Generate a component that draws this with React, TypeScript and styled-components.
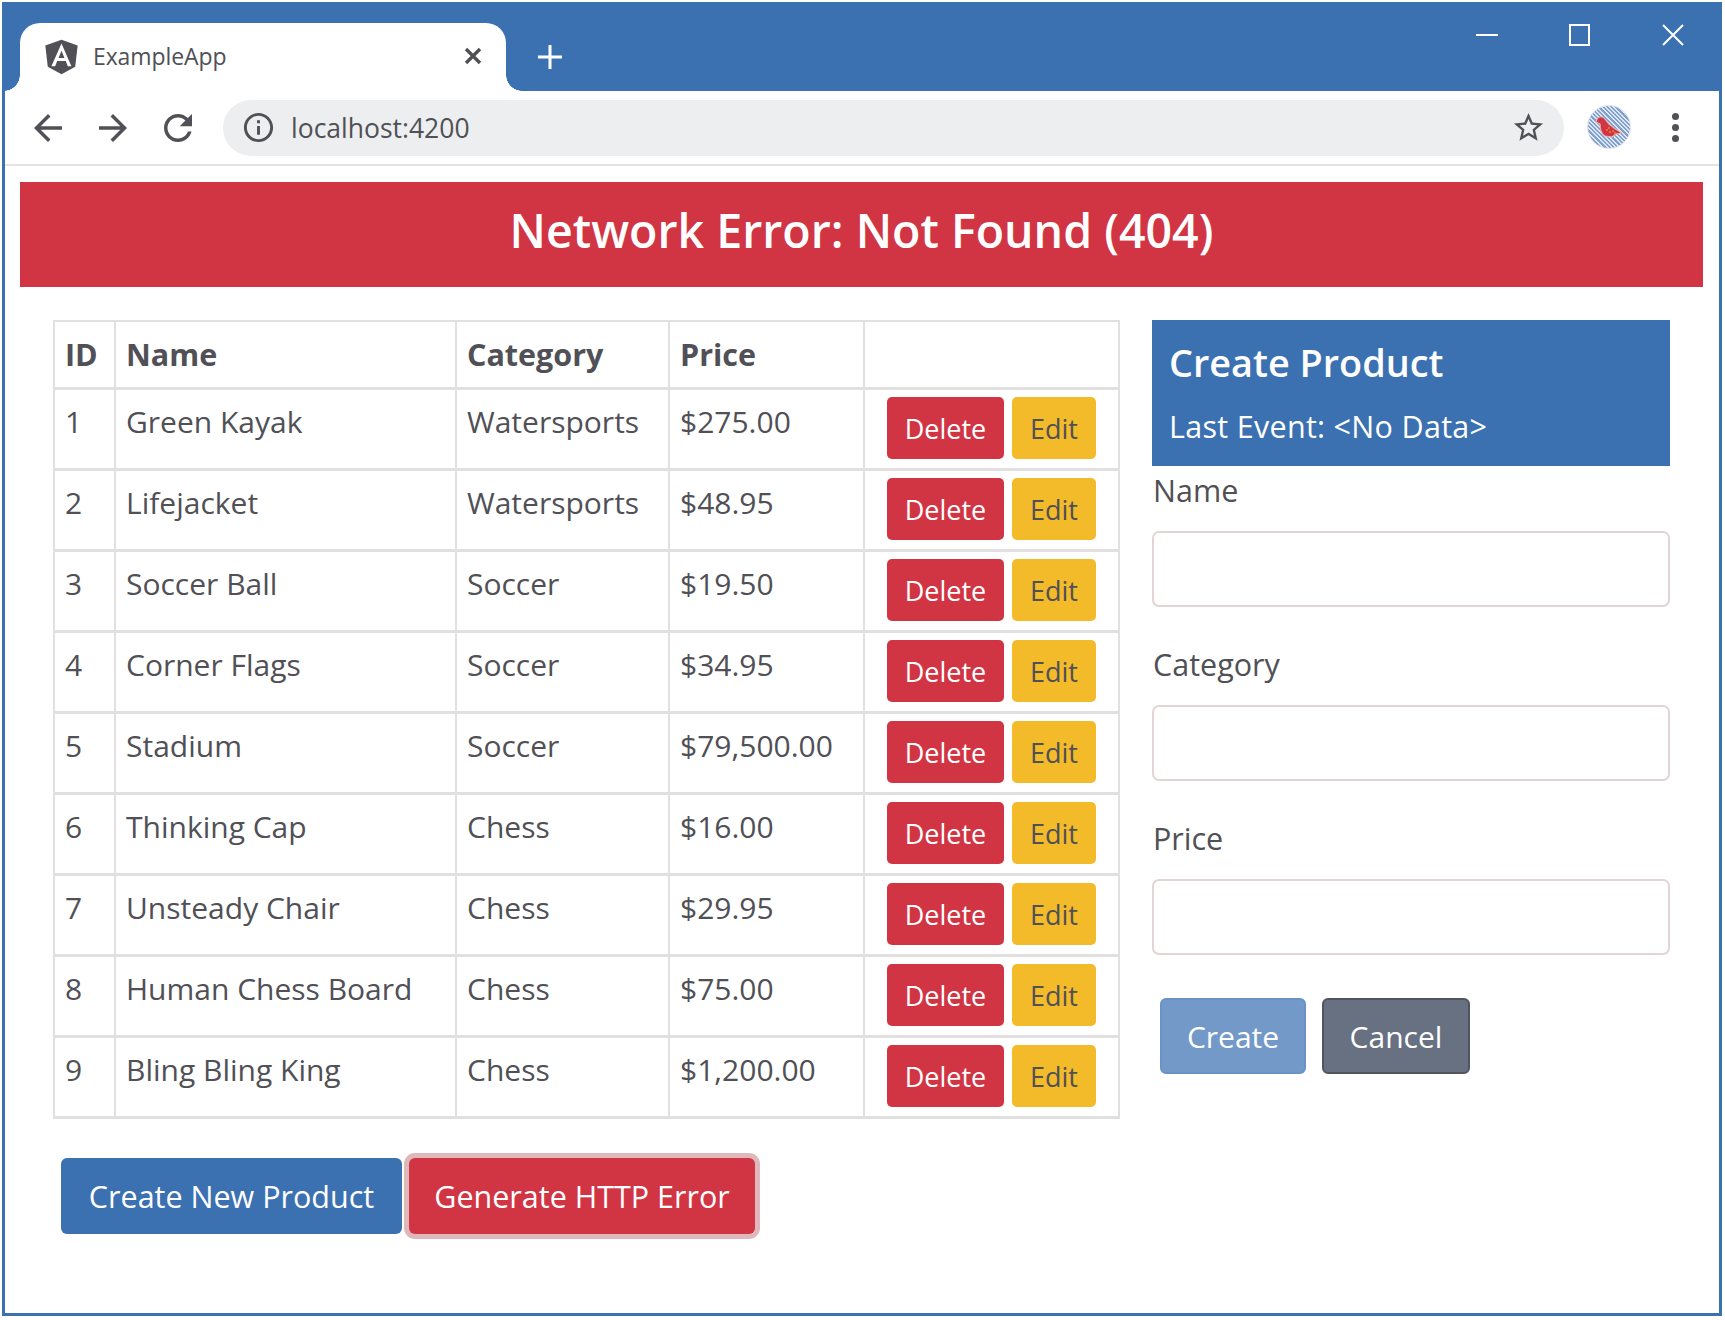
import React from "react";
import styled, { createGlobalStyle } from "styled-components";

const blue = "#3b71b1";
const red = "#d13544";
const ink = "#505056";

const GlobalStyle = createGlobalStyle`
  html, body {
    margin: 0;
    padding: 0;
    background: #ffffff;
  }
  * {
    box-sizing: border-box;
  }
`;

const products = [
  { id: 1, name: "Green Kayak", category: "Watersports", price: "$275.00" },
  { id: 2, name: "Lifejacket", category: "Watersports", price: "$48.95" },
  { id: 3, name: "Soccer Ball", category: "Soccer", price: "$19.50" },
  { id: 4, name: "Corner Flags", category: "Soccer", price: "$34.95" },
  { id: 5, name: "Stadium", category: "Soccer", price: "$79,500.00" },
  { id: 6, name: "Thinking Cap", category: "Chess", price: "$16.00" },
  { id: 7, name: "Unsteady Chair", category: "Chess", price: "$29.95" },
  { id: 8, name: "Human Chess Board", category: "Chess", price: "$75.00" },
  { id: 9, name: "Bling Bling King", category: "Chess", price: "$1,200.00" },
];

const fields = ["Name", "Category", "Price"];

const App = () => {
  return (
    <>
      <GlobalStyle />
      <Frame>
        <TitleBar>
          <Tab>
            <svg width="33" height="38" viewBox="30 28 190 204">
              <path
                fill={ink}
                d="M125 30L31.9 63.2l14.2 123.1L125 230l78.9-43.7 14.2-123.1z"
              />
              <path
                fill="#fff"
                d="M125 52.1L66.8 182.6h21.7l11.7-29.2h49.4l11.7 29.2H182L125 52.1zm17 83.3h-34l17-40.9 17 40.9z"
              />
            </svg>
            <TabTitle>ExampleApp</TabTitle>
            <TabClose width="20" height="20" viewBox="0 0 20 20">
              <path d="M3 3l14 14M17 3L3 17" stroke={ink} strokeWidth="3.4" />
            </TabClose>
          </Tab>
          <NewTab width="26" height="26" viewBox="0 0 26 26">
            <path d="M13 1v24M1 13h24" stroke="#fff" strokeWidth="3" />
          </NewTab>
          <WindowControls>
            <WindowButton>
              <svg width="24" height="24" viewBox="0 0 24 24">
                <path d="M1 12h22" stroke="#fff" strokeWidth="2" />
              </svg>
            </WindowButton>
            <WindowButton>
              <svg width="24" height="24" viewBox="0 0 24 24">
                <rect x="2" y="2" width="19" height="20" fill="none" stroke="#fff" strokeWidth="2" />
              </svg>
            </WindowButton>
            <WindowButton>
              <svg width="24" height="24" viewBox="0 0 24 24">
                <path d="M2 2l20 20M22 2L2 22" stroke="#fff" strokeWidth="2" />
              </svg>
            </WindowButton>
          </WindowControls>
        </TitleBar>

        <Toolbar>
          <NavIcon viewBox="0 0 24 24">
            <path d="M20 11H7.83l5.59-5.59L12 4l-8 8 8 8 1.41-1.41L7.83 13H20v-2z" />
          </NavIcon>
          <NavIcon viewBox="0 0 24 24">
            <path d="M12 4l-1.41 1.41L16.17 11H4v2h12.17l-5.58 5.59L12 20l8-8z" />
          </NavIcon>
          <NavIcon viewBox="0 0 24 24">
            <path d="M17.65 6.35C16.2 4.9 14.21 4 12 4c-4.42 0-7.99 3.58-7.99 8s3.57 8 7.99 8c3.73 0 6.84-2.55 7.73-6h-2.08c-.82 2.33-3.04 4-5.65 4-3.31 0-6-2.69-6-6s2.69-6 6-6c1.66 0 3.14.69 4.22 1.78L13 11h7V4l-2.35 2.35z" />
          </NavIcon>
          <AddressBar>
            <AddressIcon viewBox="0 0 24 24">
              <path d="M11 7h2v2h-2zm0 4h2v6h-2zm1-9C6.48 2 2 6.48 2 12s4.48 10 10 10 10-4.48 10-10S17.52 2 12 2zm0 18c-4.41 0-8-3.59-8-8s3.59-8 8-8 8 3.59 8 8-3.59 8-8 8z" />
            </AddressIcon>
            <Url>localhost:4200</Url>
            <AddressIcon viewBox="0 0 24 24">
              <path d="M22 9.24l-7.19-.62L12 2 9.19 8.63 2 9.24l5.46 4.73L5.82 21 12 17.27 18.18 21l-1.63-7.03L22 9.24zM12 15.4l-3.76 2.27 1-4.28-3.32-2.88 4.38-.38L12 6.1l1.71 4.04 4.38.38-3.32 2.88 1 4.28L12 15.4z" />
            </AddressIcon>
          </AddressBar>
          <Avatar>
            <svg width="30" height="24" viewBox="0 0 30 24">
              <path
                fill={red}
                stroke="#e2b6b8"
                strokeWidth="1.2"
                d="M3 4C5 1 9 1 11 4l4 5 5 4 8 5-6 1-4 3-7-1C7 19 6 14 6 9L2 7z"
              />
              <g fill="#f3bb2a">
                <circle cx="13" cy="15" r="0.8" />
                <circle cx="16" cy="17" r="0.8" />
                <circle cx="19" cy="16" r="0.8" />
                <circle cx="15" cy="13" r="0.8" />
                <circle cx="21" cy="18" r="0.8" />
              </g>
            </svg>
          </Avatar>
          <Kebab>
            <Dot />
            <Dot />
            <Dot />
          </Kebab>
        </Toolbar>

        <Content>
          <ErrorBanner>Network Error: Not Found (404)</ErrorBanner>
          <Columns>
            <TableColumn>
              <ProductTable>
                <colgroup>
                  <col style={{ width: 61 }} />
                  <col style={{ width: 341 }} />
                  <col style={{ width: 213 }} />
                  <col style={{ width: 195 }} />
                  <col style={{ width: 255 }} />
                </colgroup>
                <thead>
                  <tr>
                    <HeadCell>ID</HeadCell>
                    <HeadCell>Name</HeadCell>
                    <HeadCell>Category</HeadCell>
                    <HeadCell>Price</HeadCell>
                    <HeadCell />
                  </tr>
                </thead>
                <tbody>
                  {products.map((p) => (
                    <tr key={p.id}>
                      <Cell>{p.id}</Cell>
                      <Cell>{p.name}</Cell>
                      <Cell>{p.category}</Cell>
                      <Cell>{p.price}</Cell>
                      <ActionCell>
                        <RowActions>
                          <SmallButton $kind="delete">Delete</SmallButton>
                          <SmallButton $kind="edit">Edit</SmallButton>
                        </RowActions>
                      </ActionCell>
                    </tr>
                  ))}
                </tbody>
              </ProductTable>
              <BottomActions>
                <BigButton $width={341}>Create New Product</BigButton>
                <BigButton $width={346} $danger>
                  Generate HTTP Error
                </BigButton>
              </BottomActions>
            </TableColumn>

            <FormColumn>
              <FormHeader>
                <FormTitle>Create Product</FormTitle>
                <LastEvent>Last Event: &lt;No Data&gt;</LastEvent>
              </FormHeader>
              {fields.map((f) => (
                <FormGroup key={f}>
                  <FieldLabel>{f}</FieldLabel>
                  <FieldInput />
                </FormGroup>
              ))}
              <FormActions>
                <FormButton $kind="create" disabled>
                  Create
                </FormButton>
                <FormButton $kind="cancel">Cancel</FormButton>
              </FormActions>
            </FormColumn>
          </Columns>
        </Content>
      </Frame>
    </>
  );
};

export default App;

const Frame = styled("div")`
  margin: 2px 3px 0 2px;
  height: 1314px;
  border: solid ${blue};
  border-width: 0 3px 3px 3px;
  font-family: "Open Sans", "Noto Sans", sans-serif;
  color: ${ink};
  background: #fff;
`;

const TitleBar = styled("div")`
  height: 89px;
  background: ${blue};
  display: flex;
  align-items: flex-end;
  margin: 0 -1px;
  padding-left: 16px;
`;

const Tab = styled("div")`
  position: relative;
  width: 486px;
  height: 68px;
  background: #fff;
  border-radius: 20px 20px 0 0;
  display: flex;
  align-items: center;
  padding: 0 23px 0 25px;

  &::before,
  &::after {
    content: "";
    position: absolute;
    bottom: 0;
    width: 16px;
    height: 16px;
  }
  &::before {
    left: -16px;
    background: radial-gradient(circle at 0 0, ${blue} 15.5px, #fff 16px);
  }
  &::after {
    right: -16px;
    background: radial-gradient(circle at 100% 0, ${blue} 15.5px, #fff 16px);
  }
`;

const TabTitle = styled("span")`
  font-size: 23px;
  letter-spacing: -0.1px;
  margin-left: 15px;
  margin-top: -2px;
`;

const TabClose = styled("svg")`
  margin-left: auto;
  margin-top: -2px;
`;

const NewTab = styled("svg")`
  align-self: flex-start;
  margin: 42px 0 0 31px;
`;

const WindowControls = styled("div")`
  margin-left: auto;
  align-self: flex-start;
  display: flex;
  margin-right: 1px;
`;

const WindowButton = styled("div")`
  width: 93px;
  height: 66px;
  display: flex;
  align-items: center;
  justify-content: center;
`;

const Toolbar = styled("div")`
  height: 75px;
  display: flex;
  align-items: center;
  padding-left: 22px;
  gap: 23px;
  border-bottom: 2px solid #e6e2e3;
`;

const NavIcon = styled("svg")`
  width: 42px;
  height: 42px;
  fill: ${ink};
  flex: none;
`;

const AddressBar = styled("div")`
  width: 1341px;
  height: 56px;
  margin-left: 1px;
  border-radius: 28px;
  background: #eceef0;
  display: flex;
  align-items: center;
  padding: 0 18px 0 18px;
  flex: none;
`;

const AddressIcon = styled("svg")`
  width: 35px;
  height: 35px;
  fill: ${ink};
  flex: none;
`;

const Url = styled("span")`
  font-size: 26.5px;
  margin-left: 15px;
  flex: 1;
`;

const Avatar = styled("div")`
  width: 44px;
  height: 44px;
  flex: none;
  border-radius: 50%;
  background: repeating-linear-gradient(45deg, #7ea2cd 0 1.5px, #dfe6ef 1.5px 3px);
  border: 1px solid #e4e2e6;
  display: flex;
  align-items: center;
  justify-content: center;
  margin-top: -2px;
`;

const Kebab = styled("div")`
  display: flex;
  flex-direction: column;
  gap: 4px;
  margin-left: 18px;
`;

const Dot = styled("span")`
  width: 7px;
  height: 7px;
  border-radius: 50%;
  background: ${ink};
`;

const Content = styled("div")`
  padding: 16px 16px 0 15px;
`;

const ErrorBanner = styled("div")`
  height: 105px;
  padding-bottom: 10px;
  background: ${red};
  color: #fff;
  font-size: 46.5px;
  font-weight: 600;
  display: flex;
  align-items: center;
  justify-content: center;
`;

const Columns = styled("div")`
  display: flex;
  gap: 34px;
  margin-top: 33px;
  padding-left: 33px;
  align-items: flex-start;
`;

const TableColumn = styled("div")`
  width: 1065px;
  flex: none;
`;

const ProductTable = styled("table")`
  width: 1065px;
  table-layout: fixed;
  border-collapse: collapse;
  font-size: 30px;
`;

const HeadCell = styled("th")`
  height: 67px;
  padding: 0 0 0 10px;
  text-align: left;
  font-size: 30.5px;
  font-weight: 700;
  border: 2px solid #e2dfe0;
  border-bottom-width: 3px;
`;

const Cell = styled("td")`
  height: 81px;
  padding: 11px 0 0 10px;
  vertical-align: top;
  line-height: 42px;
  border: 2px solid #e2dfe0;
  border-top-width: 3px;
  border-bottom-width: 3px;
`;

const ActionCell = styled(Cell)`
  padding: 7px 0 0 22px;
`;

const RowActions = styled("div")`
  display: flex;
  gap: 8px;
`;

const SmallButton = styled("button")<{ $kind: "delete" | "edit" }>`
  width: ${(p) => (p.$kind === "delete" ? 117 : 84)}px;
  height: 62px;
  padding: 2px 0 0;
  border: 0;
  border-radius: 5px;
  font: inherit;
  font-size: 27px;
  background: ${(p) => (p.$kind === "delete" ? red : "#f3bb2a")};
  color: ${(p) => (p.$kind === "delete" ? "#fff" : ink)};
`;

const BottomActions = styled("div")`
  display: flex;
  gap: 7px;
  margin: 39px 0 0 8px;
`;

const BigButton = styled("button")<{ $width: number; $danger?: boolean }>`
  width: ${(p) => p.$width}px;
  height: 76px;
  padding: 0;
  border: 0;
  border-radius: 6px;
  font: inherit;
  font-size: 30.5px;
  color: #fff;
  background: ${(p) => (p.$danger ? red : blue)};
  box-shadow: ${(p) => (p.$danger ? "0 0 0 5px #deb8ba" : "none")};
`;

const FormColumn = styled("div")`
  width: 518px;
  flex: none;
`;

const FormHeader = styled("div")`
  height: 146px;
  margin-bottom: 5px;
  padding: 20px 17px 0;
  background: ${blue};
  color: #fff;
`;

const FormTitle = styled("h4")`
  margin: 0;
  font-size: 37.8px;
  line-height: 46px;
  font-weight: 600;
`;

const LastEvent = styled("div")`
  margin-top: 20px;
  font-size: 30.5px;
  letter-spacing: 0.3px;
  line-height: 40px;
`;

const FormGroup = styled("div")`
  margin-bottom: 38px;
`;

const FieldLabel = styled("label")`
  display: block;
  height: 40px;
  margin-bottom: 20px;
  padding-left: 1px;
  font-size: 30.5px;
  line-height: 38px;
`;

const FieldInput = styled("input")`
  display: block;
  width: 100%;
  height: 76px;
  border: 2px solid #e3d5d6;
  border-radius: 7px;
  background: #fff;
`;

const FormActions = styled("div")`
  display: flex;
  gap: 16px;
  margin: 43px 0 0 8px;
`;

const FormButton = styled("button")<{ $kind: "create" | "cancel" }>`
  width: ${(p) => (p.$kind === "create" ? 146 : 148)}px;
  height: 76px;
  padding: 0;
  border-radius: 6px;
  border: 2px solid ${(p) => (p.$kind === "create" ? "#6a93c5" : "#51555e")};
  font: inherit;
  font-size: 30px;
  color: #fff;
  background: ${(p) => (p.$kind === "create" ? "#7299c8" : "#687182")};
`;
